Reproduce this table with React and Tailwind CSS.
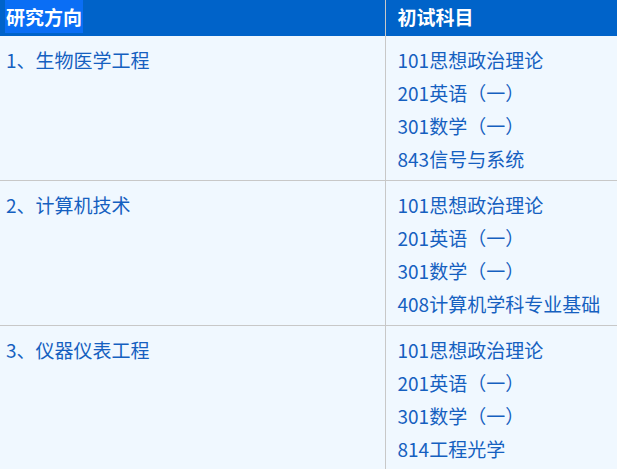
import React from "react";

const rows = [
  {
    name: "1、生物医学工程",
    subjects: ["101思想政治理论", "201英语（一）", "301数学（一）", "843信号与系统"],
  },
  {
    name: "2、计算机技术",
    subjects: ["101思想政治理论", "201英语（一）", "301数学（一）", "408计算机学科专业基础"],
  },
  {
    name: "3、仪器仪表工程",
    subjects: ["101思想政治理论", "201英语（一）", "301数学（一）", "814工程光学"],
  },
];

export default function App() {
  return (
    <div
      className="w-[617px] h-[469px] overflow-hidden bg-[#f0f8ff]"
      style={{ fontFamily: '"Noto Sans CJK SC", "Noto Sans", sans-serif' }}
    >
      <table className="w-full border-collapse text-[19px]">
        <thead>
          <tr className="bg-[#0063c9] text-white h-[36px]">
            <th className="w-[385px] text-left font-bold px-[5px] py-0 align-top border-r border-[#c8c8c8]">
              <span className="inline-block bg-[#0a6ef5] h-[33px] leading-[33px] px-[1px]">研究方向</span>
            </th>
            <th className="text-left font-bold pl-[12px] py-0 align-top">
              <span className="inline-block h-[33px] leading-[33px]">初试科目</span>
            </th>
          </tr>
        </thead>
        <tbody className="text-[#1560c0]">
          {rows.map((r, i) => (
            <tr key={i} className={i > 0 ? "border-t border-[#c8c8c8]" : ""}>
              <td className="align-top px-[6px] pt-[7px] pb-[5px] leading-[33px] border-r border-[#c8c8c8]">
                {r.name}
              </td>
              <td className="align-top pl-[12px] pt-[7px] pb-[5px] leading-[33px]">
                {r.subjects.map((s) => (
                  <div key={s} className="whitespace-nowrap">{s}</div>
                ))}
              </td>
            </tr>
          ))}
        </tbody>
      </table>
    </div>
  );
}
